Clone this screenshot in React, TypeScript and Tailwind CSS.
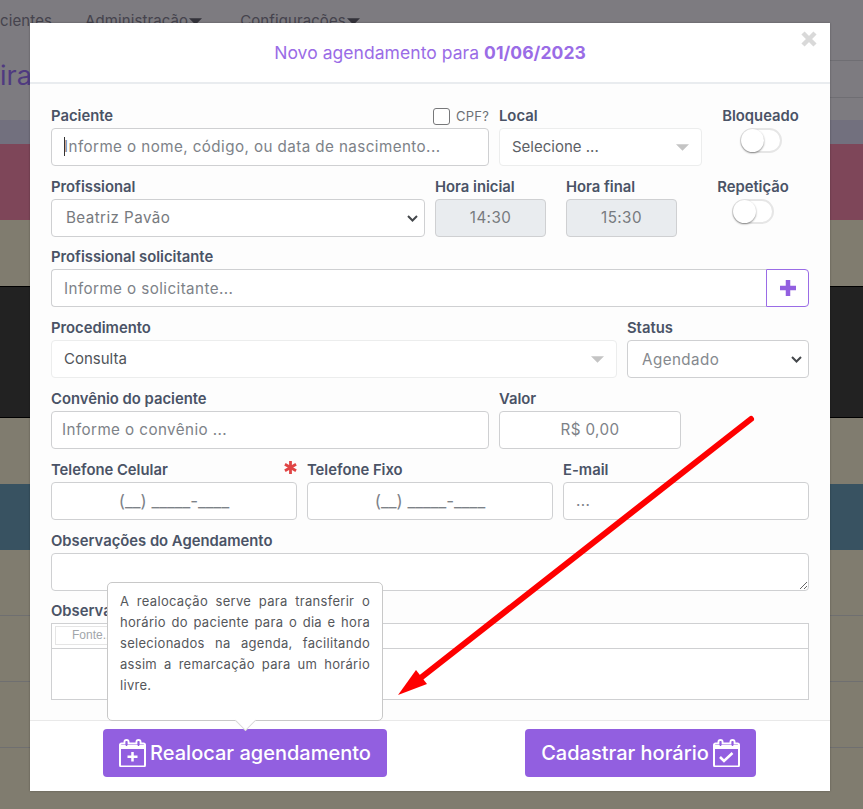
import React from "react";

const inputCls =
  "h-[38px] rounded-[4px] border border-[#cfd0d2] px-3 text-[15.2px] tracking-[0.42px] text-[#6c7075] placeholder:text-[#7d8288] outline-none";

const maskCls =
  "h-[38px] w-full rounded-[4px] border border-[#cfd0d2] bg-white px-3 text-center text-[17px] text-[#6c7075] placeholder:text-[#7d8288] outline-none";

const Label = ({ children, className = "" }: { children: React.ReactNode; className?: string }) => (
  <label className={`block h-[23px] text-[14.8px] leading-[23px] font-semibold text-[#4a5366] whitespace-nowrap ${className}`}>
    {children}
  </label>
);

const Toggle = ({ className = "" }: { className?: string }) => (
  <div className={`relative h-[25px] w-[42px] rounded-full border-2 border-[#e6e6e6] bg-white ${className}`}>
    <div className="absolute -left-[1px] -top-[1px] h-[23px] w-[23px] rounded-full bg-white shadow-[0_1px_2px_rgba(0,0,0,0.45)]" />
  </div>
);

const Caret = ({ className = "" }: { className?: string }) => (
  <svg viewBox="0 0 20 10" className={`h-[7px] w-[13px] ${className}`}>
    <path d="M0 0h20L10 10z" fill="currentColor" />
  </svg>
);

const Select = ({ value, className = "" }: { value: string; className?: string }) => (
  <div className="relative">
    <select className={`${inputCls} w-full appearance-none bg-white pl-[14px] pt-[2px] ${className}`} defaultValue={value}>
      <option value={value}>{value}</option>
    </select>
    <svg viewBox="0 0 11 7" className="pointer-events-none absolute right-[7px] top-[16px] h-[7px] w-[11px]" fill="none">
      <path d="M1 1l4.500 4.500L10 1" stroke="#44474b" strokeWidth="2" />
    </svg>
  </div>
);

const CalendarIcon = ({ kind }: { kind: "plus" | "check" }) => (
  <svg viewBox="0 0 27 28" className="h-[28px] w-[27px] shrink-0" fill="none">
    <path
      d="M2.5 4.5h3V3a2 2 0 0 1 4 0v1.500h8V3a2 2 0 0 1 4 0v1.500h3a1.500 1.500 0 0 1 1.500 1.500v20a1.500 1.500 0 0 1-1.500 1.500h-22A1.500 1.500 0 0 1 1 26V6a1.500 1.500 0 0 1 1.500-1.500z"
      stroke="white"
      strokeWidth="2"
    />
    <path d="M1 6h25v4H1z" fill="white" />
    <path d="M7.500 2v5M19.500 2v5" stroke="#925fe0" strokeWidth="1.500" />
    {kind === "plus" ? (
      <path d="M13.500 13v9.500M8.500 17.700h10" stroke="white" strokeWidth="2.500" />
    ) : (
      <path d="M7 18l4 4 8.500-8" stroke="white" strokeWidth="2.500" />
    )}
  </svg>
);

const rows = [
  "h-[24px] bg-[#72707e]",
  "h-[76px] bg-[#7e4659]",
  "h-[66px] bg-[#807c6f]",
  "h-[132px] bg-[#222222] border-y border-black",
  "h-[66px] bg-[#807c6f]",
  "h-[66px] bg-[#385261]",
  "h-[66px] bg-[#807c6f] border-b border-[#6f6f70]",
  "h-[66px] bg-[#807c6f] border-b border-[#6f6f70]",
  "h-[66px] bg-[#807c6f] border-b border-[#6f6f70]",
  "h-[61px] bg-[#807c6f]",
];

export default function App() {
  return (
    <div
      className="relative h-[809px] w-[863px] overflow-hidden bg-[#7d7b80]"
      style={{ fontFamily: "Inter, 'Open Sans', sans-serif" }}
    >
      {/* page behind the modal */}
      <div className="h-[120px]">
        <div className="relative flex h-[61px] items-start gap-[33px] pt-[10px] text-[15px] tracking-[0.1px] text-[#45434d]">
          <span className="-ml-[16px] w-[68px] overflow-hidden whitespace-nowrap text-right">cientes</span>
          <span className="flex items-center gap-[1px]">
            Administração <Caret className="text-[#33323a]" />
          </span>
          <span className="ml-[5px] flex items-center gap-[1px]">
            Configurações <Caret className="text-[#33323a]" />
          </span>
          <span className="absolute bottom-0 right-0 h-px w-[40px] bg-[#6f6e73]" />
        </div>
        <div className="relative h-[37px] pl-0 text-[27px] leading-[30px] text-[#4f3a80]">
          ira
          <span className="absolute bottom-0 right-0 h-px w-[40px] bg-[#6f6e73]" />
        </div>
      </div>
      {rows.map((r, i) => (
        <div key={i} className={r} />
      ))}

      {/* modal */}
      <div className="absolute left-[30px] top-[23px] flex h-[768px] w-[800px] flex-col bg-[#fdfdfd] shadow-[0_0_2px_rgba(0,0,0,0.3)]">
        <div className="relative flex h-[61px] items-center justify-center border-b-2 border-[#e9ecef] bg-white pt-[2px] text-[17.5px] tracking-[0.05px] text-[#9a6ce6]">
          <span>
            Novo agendamento para <b className="font-bold">01/06/2023</b>
          </span>
          <svg viewBox="0 0 16 16" className="absolute right-[13px] top-[8px] h-[16px] w-[16px]">
            <path d="M2 2l12 12M14 2L2 14" stroke="#d9d9d9" strokeWidth="4.500" />
          </svg>
        </div>

        <div className="flex-1 px-[21px] pt-[21px]">
          {/* paciente / local / bloqueado */}
          <div className="flex h-[70.7px] gap-[10px]">
            <div className="relative w-[438px]">
              <Label>Paciente</Label>
              <div className="absolute right-0 top-[2px] flex items-center gap-[6px] text-[13px] tracking-[0.2px] text-[#6c7075]">
                <span className="h-[17px] w-[17px] rounded-[3px] border border-[#77787a] bg-white" />
                CPF?
              </div>
              <input className={`${inputCls} w-full border-[#8f9194] bg-white pb-[2px]`} placeholder="Informe o nome, código, ou data de nascimento..." />
              <span className="absolute left-[13px] top-[32px] h-[19px] w-[1px] bg-[#333]" />
            </div>
            <div className="w-[203px]">
              <Label>Local</Label>
              <div className="flex h-[38px] items-center justify-between rounded-[4px] border border-[#eceded] bg-white pl-3 pr-[12px] text-[15px] text-[#5d6166]">
                Selecione ...
                <Caret className="text-[#c4c4c4]" />
              </div>
            </div>
            <div className="flex flex-1 flex-col items-center">
              <Label>Bloqueado</Label>
              <Toggle />
            </div>
          </div>

          {/* profissional / horas / repetição */}
          <div className="flex h-[70.7px]">
            <div className="w-[374px]">
              <Label>Profissional</Label>
              <Select value="Beatriz Pavão" className="text-[#777a7e]" />
            </div>
            <div className="ml-[10px] w-[111px]">
              <Label>Hora inicial</Label>
              <input className={`${inputCls} w-full bg-[#e9ecef] text-center text-[#777a7e]`} disabled value="14:30" readOnly />
            </div>
            <div className="ml-[20px] w-[111px]">
              <Label>Hora final</Label>
              <input className={`${inputCls} w-full bg-[#e9ecef] text-center text-[#777a7e]`} disabled value="15:30" readOnly />
            </div>
            <div className="ml-[39px] flex w-[74px] flex-col items-center">
              <Label>Repetição</Label>
              <Toggle />
            </div>
          </div>

          {/* solicitante */}
          <div className="h-[70.7px]">
            <Label>Profissional solicitante</Label>
            <div className="flex">
              <input className={`${inputCls} min-w-0 flex-1 rounded-r-none border-r-0 bg-white`} placeholder="Informe o solicitante..." />
              <button className="flex h-[38px] w-[43px] items-center justify-center rounded-r-[4px] border border-[#9a6ce6] bg-white">
                <svg viewBox="0 0 16 16" className="h-[16px] w-[16px]">
                  <path d="M8 0v16M0 8h16" stroke="#925fe0" strokeWidth="4.500" />
                </svg>
              </button>
            </div>
          </div>

          {/* procedimento / status */}
          <div className="flex h-[70.7px] gap-[10px]">
            <div className="w-[566px]">
              <Label>Procedimento</Label>
              <div className="flex h-[38px] items-center justify-between rounded-[4px] border border-[#eceded] bg-white pl-3 pr-[12px] text-[15px] text-[#505459]">
                Consulta
                <Caret className="text-[#c4c4c4]" />
              </div>
            </div>
            <div className="flex-1">
              <Label>Status</Label>
              <Select value="Agendado" className="text-[#85898e]" />
            </div>
          </div>

          {/* convênio / valor */}
          <div className="flex h-[71.2px] gap-[10px]">
            <div className="w-[438px]">
              <Label>Convênio do paciente</Label>
              <input className={`${inputCls} w-full bg-white px-[10px]`} placeholder="Informe o convênio ..." />
            </div>
            <div className="w-[182px]">
              <Label>Valor</Label>
              <input className={`${inputCls} w-full bg-white text-center`} placeholder="R$ 0,00" />
            </div>
          </div>

          {/* telefones / email */}
          <div className="flex h-[70.8px] gap-[10px]">
            <div className="relative w-[246px]">
              <Label>Telefone Celular</Label>
              <svg viewBox="0 0 14 14" className="absolute right-0 top-[2px] h-[13px] w-[13px]">
                <path d="M7 0v14M1 3.500l12 7M13 3.500l-12 7" stroke="#e04545" strokeWidth="3" />
              </svg>
              <input className={maskCls} placeholder="(__) _____-____" />
            </div>
            <div className="w-[246px]">
              <Label>Telefone Fixo</Label>
              <input className={maskCls} placeholder="(__) _____-____" />
            </div>
            <div className="w-[246px]">
              <Label>E-mail</Label>
              <input className={`${inputCls} w-full bg-white`} placeholder="..." />
            </div>
          </div>

          {/* observações */}
          <div className="h-[70.2px]">
            <Label>Observações do Agendamento</Label>
            <textarea className="block h-[38px] w-full rounded-[4px] border border-[#cfd0d2] bg-white outline-none" />
          </div>
          <div>
            <Label>Observações</Label>
            <div className="border border-[#cfd0d2] bg-white">
              <div className="flex h-[25px] items-center border-b border-[#cfd0d2] pl-[3px]">
                <div
                  className="h-[19px] w-[120px] border border-[#e5e5e5] pl-[16px] text-[12px] leading-[17px] text-[#a2a6aa]"
                  style={{ fontFamily: "'Liberation Sans', sans-serif" }}
                >
                  Fonte...
                </div>
              </div>
              <div className="h-[50px]" />
            </div>
          </div>
        </div>

        {/* footer */}
        <div className="flex h-[71px] items-start border-t border-[#e9e9e9] bg-white pl-[73px] pt-[8px]">
          <button className="flex h-[48px] w-[284px] items-center justify-center gap-[4px] rounded-[4px] bg-[#925fe0] text-[20px] font-medium text-white">
            <CalendarIcon kind="plus" />
            Realocar agendamento
          </button>
          <button className="ml-[138px] flex h-[48px] w-[231px] items-center justify-center gap-[4px] rounded-[4px] bg-[#925fe0] text-[20px] font-medium text-white">
            Cadastrar horário
            <CalendarIcon kind="check" />
          </button>
        </div>
      </div>

      {/* tooltip */}
      <div className="absolute left-[107px] top-[582px] h-[139px] w-[276px] rounded-[5px] border border-[#c8c8c8] bg-white px-[12px] py-[8px] text-justify text-[13px] leading-[21px] tracking-[0.3px] text-[#55575b]">
        A realocação serve para transferir o horário do paciente para o dia e hora selecionados na agenda, facilitando assim a remarcação para um horário livre.
        <span className="absolute bottom-[-8px] left-[130px] h-[15px] w-[15px] rotate-45 border-b border-r border-[#d8d8d8] bg-white" />
      </div>

      {/* red arrow */}
      <svg className="pointer-events-none absolute left-0 top-0 h-[809px] w-[863px]" viewBox="0 0 863 809">
        <path d="M751 419L418 680" stroke="#fe0000" strokeWidth="6" strokeLinecap="round" />
        <path d="M398 695L416 670L427 684z" fill="#fe0000" />
      </svg>
    </div>
  );
}
